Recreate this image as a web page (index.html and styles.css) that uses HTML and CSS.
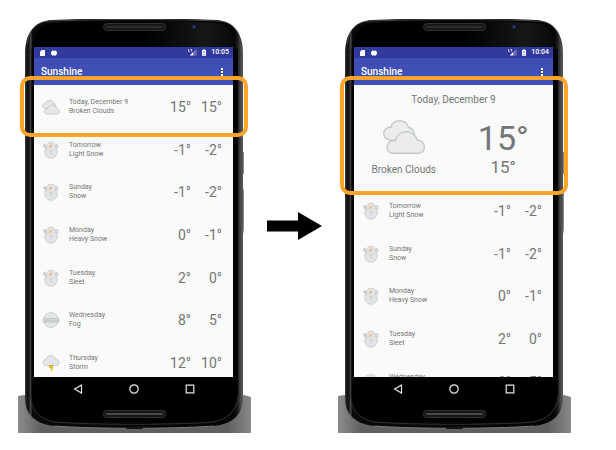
FILE: index.html
```html
<!DOCTYPE html>
<html lang="en">
<head>
<meta charset="utf-8">
<meta name="viewport" content="width=device-width, initial-scale=1">
<title>Sunshine</title>
<link rel="stylesheet" href="styles.css">
</head>
<body>
<svg class="sprite" aria-hidden="true">
  <defs>
    <linearGradient id="rim" x1="0" x2="1" y1="0" y2="0">
      <stop offset="0" stop-color="#3c3c3c"/>
      <stop offset=".01" stop-color="#111"/>
      <stop offset=".02" stop-color="#1c1c1c"/>
      <stop offset=".026" stop-color="#4a4a4a"/>
      <stop offset=".034" stop-color="#0a0a0a"/>
      <stop offset=".96" stop-color="#050505"/>
      <stop offset=".975" stop-color="#1a1a1a"/>
      <stop offset=".988" stop-color="#444"/>
      <stop offset="1" stop-color="#5c5c5c"/>
    </linearGradient>
    <linearGradient id="glass" x1="0" x2="1" y1="0" y2="0">
      <stop offset="0" stop-color="#000"/>
      <stop offset=".55" stop-color="#000"/>
      <stop offset=".85" stop-color="#171717"/>
      <stop offset="1" stop-color="#080808"/>
    </linearGradient>
    <linearGradient id="stand" x1="0" x2="1" y1="0" y2="0">
      <stop offset="0" stop-color="#8c8c8c"/>
      <stop offset=".1" stop-color="#606060"/>
      <stop offset=".9" stop-color="#606060"/>
      <stop offset="1" stop-color="#898989"/>
    </linearGradient>
    <linearGradient id="key" x1="0" x2="1" y1="0" y2="0">
      <stop offset="0" stop-color="#333"/>
      <stop offset="1" stop-color="#999"/>
    </linearGradient>
  </defs>
  <symbol id="chrome" viewBox="0 0 233 414" preserveAspectRatio="none">
    <path fill="url(#stand)" d="M0 377l7-1h219l7 2v36H0z"/>
    <path fill="url(#key)" d="M223 133h3v22h-3zM223 168h2l1 4v38l-1 6h-2z"/>
    <path fill="url(#rim)" d="M7 34C7 14 17 2 34 1C80-1 154-1 198 1C215 2 225 14 225 34V379C225 397 213 405 196 407C160 410 72 410 36 407C19 405 7 397 7 379z"/>
    <path fill="none" stroke="#444" stroke-width="1" d="M9 25C11 9 20 2 34 2C80 0 154 0 198 2C212 2 221 9 223 25"/>
    <path fill="url(#glass)" d="M14 30C15 13 23 5 37 4C80 2 154 2 196 4C210 5 217 14 218 30z"/>
    <path fill="#000" d="M13 30h207v347C219 392 209 401 194 403C160 406 72 406 38 403C23 401 13 392 13 377z"/>
    <path fill="none" stroke="#333" stroke-width="1" d="M13 30V377C13 392 23 401 38 403C72 406 160 406 194 403C209 401 219 392 220 377"/>
    <path fill="none" stroke="#7b7b7b" d="M36 407C76 410 156 410 196 407"/>
    <path fill="#161616" d="M106 408h21l-3 2h-15z"/>
    <rect x="85.500" y="4.500" width="62" height="7" rx="3.500" fill="#171717" stroke="#303030"/>
    <rect x="88" y="7" width="57" height="2" rx="1" fill="#2c2c2c"/>
    <rect x="85.500" y="391.500" width="62" height="7" rx="3" fill="#171717" stroke="#303030"/>
    <rect x="88" y="394" width="57" height="2" rx="1" fill="#484848"/>
    <circle cx="176" cy="8" r="2.200" fill="#1c2247"/>
    <circle cx="176" cy="8" r="1" fill="#354284"/>
  </symbol>
  <symbol id="clouds" viewBox="0 0 42 34">
    <g fill="#ececec" stroke="#c4cacd" stroke-width="1.400">
      <path d="M7 20C2 19 .7 15.500.7 13.500C.7 10 3.500 7 8 7C9 3 12 .7 16.500.7C21 .7 24.500 3.500 25.500 7.500C29 8 31.500 11 31.500 14C31.500 18 28 20.500 25 20.500z"/>
      <path d="M10 33.300C6 33.300 4 30 4 27C4 23.500 7 20.500 10.500 20.500C12 20.500 12 20.500 12.500 20.500C13.500 15 18 11.800 23.500 11.800C29 11.800 33 15.500 34 20C38 20 41.300 23 41.300 27C41.300 30.500 39 33.300 35 33.300z"/>
    </g>
  </symbol>
  <symbol id="clouds-small" viewBox="0 0 18 18">
    <g fill="#e6e6e6" stroke="#c3c8ca" stroke-width=".9">
      <path d="M3 10.500C1.300 10.300.7 9 .7 7.800C.7 6.500 1.800 5.300 3.500 5.300C4.200 3.300 5.800 2.300 7.500 2.300C9.500 2.300 11 3.500 11.500 5.300C13 5.500 14 6.800 14 8C14 9.500 12.800 10.500 11.500 10.500z"/>
      <path d="M5 16C3.300 16 2.400 14.800 2.400 13.400C2.400 12 3.500 10.800 5.300 10.800C6 8.500 8 7 10.200 7C12.500 7 14 8.500 14.500 10.500C16.200 10.500 17.500 11.800 17.500 13.400C17.500 14.800 16.500 16 15 16z"/>
    </g>
  </symbol>
  <symbol id="snowman" viewBox="0 0 18 18">
    <path d="M4.500 8L2.300 5.500M.8 4.700L4.500 5.200M2.700 3.200L3.200 6M13 5l2-1.800M13.500 7.500l2-1v-2.500" fill="none" stroke="#c2c9cc" stroke-width="1.300"/>
    <circle cx="9" cy="11" r="6.300" fill="#e2e3e3" stroke="#c9cdce" stroke-width=".8"/>
    <circle cx="9" cy="5.700" r="4.600" fill="#e2e3e3" stroke="#c9cdce" stroke-width=".8"/>
    <path d="M5.500 7h7v3h-7z" fill="#e2e3e3"/>
    <path d="M9.200 4L7.200 6.600l2.400-1.600z" fill="#f5a33a" stroke="#f5a33a" stroke-width=".6"/>
    <circle cx="9" cy="9.600" r=".6" fill="#b3b9bb"/>
    <circle cx="9" cy="12.400" r=".6" fill="#b3b9bb"/>
  </symbol>
  <symbol id="fog" viewBox="0 0 18 18">
    <circle cx="9" cy="9" r="7.500" fill="#e4e5e5" stroke="#c6cacb" stroke-width=".8"/>
    <rect x=".5" y="7" width="17" height="4.500" rx="1.500" fill="#d0d5d7"/>
    <path d="M1 7.500h15M2 9.300h15M1.500 11.200h14" fill="none" stroke="#c0c7ca" stroke-width=".7"/>
  </symbol>
  <symbol id="storm" viewBox="0 0 18 18">
    <path d="M7 10h4l-.8 3h1.300L9 18L8.800 14H7z" fill="#e5c100"/>
    <path d="M4 11.500C1.800 11.500.9 10 .9 8.500C.9 6.500 2.500 5.500 3.800 5.500C4.500 3 6.500 1.500 9 1.500C11.500 1.500 13.500 3 14.100 5.300C16 5.500 17.200 7 17.200 8.600C17.200 10.500 15.800 11.500 14.200 11.500z" fill="#e5e6e6" stroke="#c3c8ca" stroke-width=".8"/>
    <path d="M7 11h4v1.500H7z" fill="#c9a92d"/>
  </symbol>
  <symbol id="card" viewBox="0 0 6 7"><path fill="#fff" d="M2 0h4v7H0V2z"/></symbol>
  <symbol id="droid" viewBox="0 0 7 7"><path fill="#fff" d="M1 .500h1l.5.500h2L5 .500h1v1l1 .700v2.600L6 5.500v1H1v-1L0 4.800V2.200l1-.700z"/></symbol>
  <symbol id="signal" viewBox="0 0 10 8">
    <path fill="#c5c9eb" d="M0 0h1v2h1v1H0zM2.500 0h2v3h-1V1h-1z"/>
    <path fill="#fff" d="M2 7.500L6 3v4.500z"/>
    <path fill="#8188cf" d="M6.500 3L9.500 0v7.500h-3z"/>
    <path fill="#303a9c" d="M7.800 2v4.500h.7V2z"/>
  </symbol>
  <symbol id="battery" viewBox="0 0 5 8">
    <path fill="#fff" d="M1.500 0h2v1H5v7H0V1h1.500z"/>
    <path fill="#303f9f" d="M2 2.500h1v2H2z"/>
    <path fill="#8d95d3" d="M1 5.500h3v1H1z"/>
  </symbol>
  <symbol id="back" viewBox="0 0 10 10"><path fill="none" stroke="#e6e6e6" stroke-width="1.200" d="M8.500 1v8L1.500 5z"/></symbol>
  <symbol id="home" viewBox="0 0 10 10"><circle cx="5" cy="5" r="4.200" fill="none" stroke="#e6e6e6" stroke-width="1.200"/></symbol>
  <symbol id="recent" viewBox="0 0 10 10"><path fill="none" stroke="#e6e6e6" stroke-width="1.200" d="M1.200 1.200h7.600v7.600H1.200z"/></symbol>
</svg>

<main class="stage">
  <section class="device" aria-label="Forecast list">
    <svg class="chrome" aria-hidden="true"><use href="#chrome"/></svg>
    <div class="screen">
      <div class="status">
        <svg class="ic-card"><use href="#card"/></svg>
        <svg class="ic-droid"><use href="#droid"/></svg>
        <svg class="ic-signal"><use href="#signal"/></svg>
        <svg class="ic-battery"><use href="#battery"/></svg>
        <span>10:05</span>
      </div>
      <header class="appbar"><h1>Sunshine</h1><button class="menu" type="button" aria-label="More options"><i></i><i></i><i></i></button></header>
      <div class="content">
        <ul class="days">
          <li><svg class="sky"><use href="#clouds-small"/></svg><p>Today, December 9<br>Broken Clouds</p><b>15°</b><b>15°</b></li>
          <li><svg class="sky"><use href="#snowman"/></svg><p>Tomorrow<br>Light Snow</p><b>-1°</b><b>-2°</b></li>
          <li><svg class="sky"><use href="#snowman"/></svg><p>Sunday<br>Snow</p><b>-1°</b><b>-2°</b></li>
          <li><svg class="sky"><use href="#snowman"/></svg><p>Monday<br>Heavy Snow</p><b>0°</b><b>-1°</b></li>
          <li><svg class="sky"><use href="#snowman"/></svg><p>Tuesday<br>Sleet</p><b>2°</b><b>0°</b></li>
          <li><svg class="sky"><use href="#fog"/></svg><p>Wednesday<br>Fog</p><b>8°</b><b>5°</b></li>
          <li><svg class="sky"><use href="#storm"/></svg><p>Thursday<br>Storm</p><b>12°</b><b>10°</b></li>
        </ul>
      </div>
      <nav class="keys">
        <button type="button" aria-label="Back"><svg><use href="#back"/></svg></button>
        <button type="button" aria-label="Home"><svg><use href="#home"/></svg></button>
        <button type="button" aria-label="Recent apps"><svg><use href="#recent"/></svg></button>
      </nav>
    </div>
    <div class="highlight"></div>
  </section>

  <svg class="arrow" viewBox="0 0 55 28" aria-hidden="true"><path d="M0 8.500h31V0l24 14l-24 14v-8.500H0z"/></svg>

  <section class="device" aria-label="Forecast with today enlarged">
    <svg class="chrome" aria-hidden="true"><use href="#chrome"/></svg>
    <div class="screen">
      <div class="status">
        <svg class="ic-card"><use href="#card"/></svg>
        <svg class="ic-droid"><use href="#droid"/></svg>
        <svg class="ic-signal"><use href="#signal"/></svg>
        <svg class="ic-battery"><use href="#battery"/></svg>
        <span>10:04</span>
      </div>
      <header class="appbar"><h1>Sunshine</h1><button class="menu" type="button" aria-label="More options"><i></i><i></i><i></i></button></header>
      <div class="content">
        <div class="today">
          <h2>Today, December 9</h2>
          <div class="half"><svg class="big-sky"><use href="#clouds"/></svg><span class="label">Broken Clouds</span></div>
          <div class="half"><span class="high">15°</span><span class="low">15°</span></div>
        </div>
        <ul class="days">
          <li><svg class="sky"><use href="#snowman"/></svg><p>Tomorrow<br>Light Snow</p><b>-1°</b><b>-2°</b></li>
          <li><svg class="sky"><use href="#snowman"/></svg><p>Sunday<br>Snow</p><b>-1°</b><b>-2°</b></li>
          <li><svg class="sky"><use href="#snowman"/></svg><p>Monday<br>Heavy Snow</p><b>0°</b><b>-1°</b></li>
          <li><svg class="sky"><use href="#snowman"/></svg><p>Tuesday<br>Sleet</p><b>2°</b><b>0°</b></li>
          <li><svg class="sky"><use href="#fog"/></svg><p>Wednesday<br>Fog</p><b>8°</b><b>5°</b></li>
        </ul>
      </div>
      <nav class="keys">
        <button type="button" aria-label="Back"><svg><use href="#back"/></svg></button>
        <button type="button" aria-label="Home"><svg><use href="#home"/></svg></button>
        <button type="button" aria-label="Recent apps"><svg><use href="#recent"/></svg></button>
      </nav>
    </div>
    <div class="highlight tall"></div>
  </section>
</main>
</body>
</html>
```
FILE: styles.css
```css
* { box-sizing: border-box; margin: 0; padding: 0; }

body {
  background: #fff;
  color: #757575;
  font-family: Roboto, "Liberation Sans", sans-serif;
}

button { border: 0; background: none; font: inherit; }

.sprite { position: absolute; width: 0; height: 0; }

.stage {
  display: grid;
  grid-template-columns: 1fr 87px 1fr;
  align-items: center;
  justify-items: center;
  padding: 19px 45px 16px 18px;
}

.arrow { width: 55px; height: 28px; }

.device {
  position: relative;
  width: 100%;
  padding: 28px 18px 32px 16px;
}

.chrome {
  position: absolute;
  inset: 0;
  width: 100%;
  height: 100%;
}

.screen { position: relative; }

.status {
  display: flex;
  align-items: center;
  gap: 5px;
  height: 11px;
  padding: 0 4px 0 6px;
  background: #303a9c;
  color: #fff;
  font-size: 7px;
  font-weight: 500;
  line-height: 13px;
}

.ic-card { width: 5px; height: 6px; }
.ic-droid { width: 6px; height: 6px; margin-left: 1px; }
.ic-signal { width: 9px; height: 7px; margin-left: auto; }
.ic-battery { width: 4px; height: 7px; }

.appbar {
  display: flex;
  align-items: center;
  justify-content: space-between;
  height: 27px;
  padding: 0 7px;
  background: #3f4fb6;
  color: #fff;
}

.appbar h1 { font-size: 10px; font-weight: 500; line-height: 12px; }

.menu {
  display: flex;
  flex-direction: column;
  align-items: center;
  gap: 1px;
  width: 8px;
}

.menu i { width: 2px; height: 2px; background: #fff; }

.content {
  height: 292px;
  overflow: hidden;
  background: #fafafa;
}

.days {
  display: grid;
  grid-template-rows: repeat(7, 1fr);
  height: 299px;
  padding-top: 1px;
  list-style: none;
}

.days li {
  display: grid;
  grid-template-columns: 18px 1fr 31px 31px;
  align-items: center;
  padding: 0 11px 0 8px;
}

.sky { width: 18px; height: 18px; }

.days p {
  padding-left: 9px;
  font-size: 7px;
  line-height: 9px;
  white-space: nowrap;
}

.days b {
  font-size: 14px;
  font-weight: 400;
  line-height: 18px;
  text-align: right;
}

.today {
  display: grid;
  grid-template-columns: 1fr 1fr;
  grid-template-rows: 14px 1fr;
  height: 104px;
  padding-top: 8px;
}

.today h2 {
  grid-column: 1 / -1;
  font-size: 10px;
  font-weight: 400;
  line-height: 14px;
  text-align: center;
}

.half {
  display: flex;
  flex-direction: column;
  align-items: center;
}

.big-sky { width: 42px; height: 34px; margin: 13px 0 8px; }
.label { font-size: 10px; line-height: 16px; }
.high { margin-top: 12px; font-size: 34px; line-height: 38px; }
.low { font-size: 17px; line-height: 20px; }

.keys {
  display: flex;
  justify-content: center;
  height: 24px;
}

.keys button {
  display: flex;
  align-items: center;
  justify-content: center;
  width: 56px;
}

.keys svg { width: 10px; height: 10px; }

.highlight {
  position: absolute;
  top: 57px;
  left: 2px;
  right: 3px;
  height: 61px;
  border: 4px solid #fca42b;
  border-radius: 10px;
  pointer-events: none;
}

.highlight.tall { height: 119px; }
```
